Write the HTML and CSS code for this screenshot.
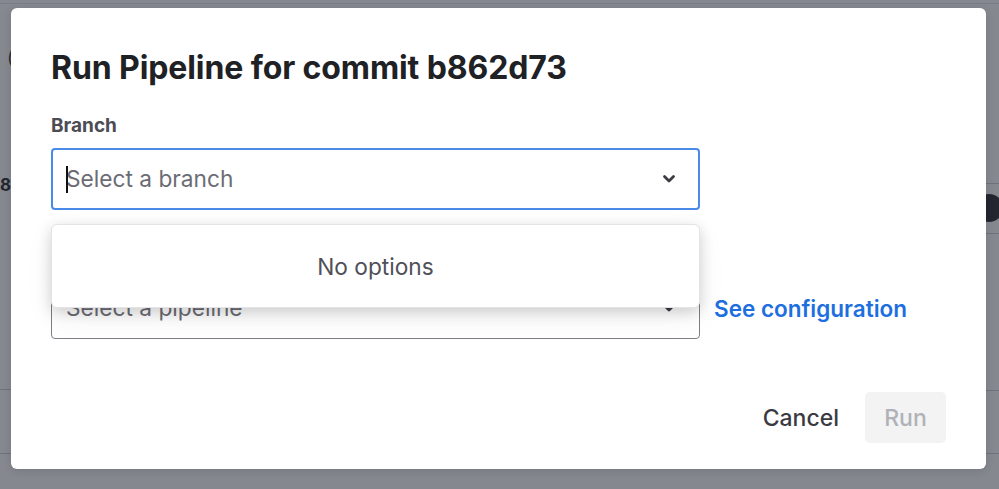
FILE: index.html
```html
<!DOCTYPE html>
<html>
<head>
<meta charset="utf-8">
<link rel="stylesheet" href="styles.css">
</head>
<body>
<div class="page">
  <div class="bg-top"></div>
  <span class="bg-paren">(</span>
  <span class="bg-eight">8</span>
  <div class="bg-line l1"></div>
  <div class="bg-line l2"></div>
  <div class="bg-line r1"></div>
  <div class="bg-line r2"></div>
  <div class="bg-line r3"></div>
  <div class="bg-line r4"></div>
  <div class="bg-circle"></div>
</div>
<div class="overlay">
  <div class="modal">
    <h1 class="title">Run Pipeline for commit b862d73</h1>
    <div class="field">
      <label class="label">Branch</label>
      <div class="select focused">
        <span class="caret"></span>
        <span class="placeholder">Select a branch</span>
        <svg class="chev" viewBox="0 0 16 16" width="16" height="16"><path d="M3.5 5.5 L8 10 L12.5 5.5" fill="none" stroke="#3c3d44" stroke-width="2.8" stroke-linecap="round" stroke-linejoin="round"/></svg>
      </div>
      <div class="menu">No options</div>
    </div>
    <div class="field second">
      <label class="label">Pipeline</label>
      <div class="row">
        <div class="select">
          <span class="placeholder">Select a pipeline</span>
          <svg class="chev" viewBox="0 0 16 16" width="16" height="16"><path d="M3.5 5.5 L8 10 L12.5 5.5" fill="none" stroke="#3c3d44" stroke-width="2.8" stroke-linecap="round" stroke-linejoin="round"/></svg>
        </div>
        <a class="link">See configuration</a>
      </div>
    </div>
    <div class="footer">
      <button class="btn cancel">Cancel</button>
      <button class="btn run">Run</button>
    </div>
  </div>
</div>
</body>
</html>
```
FILE: styles.css
```css
html, body {
  margin: 0;
  padding: 0;
  width: 999px;
  height: 489px;
  overflow: hidden;
  font-family: Inter, "Noto Sans", sans-serif;
}
.page {
  position: absolute;
  inset: 0;
  background: #ffffff;
}
.bg-top {
  position: absolute;
  left: 0;
  right: 0;
  top: 0;
  height: 3px;
  background: #ffffff;
  border-bottom: 1px solid #e4e4e7;
}
.bg-paren {
  position: absolute;
  left: 7px;
  top: 48px;
  font-size: 18px;
  line-height: 20px;
  color: #222;
}
.bg-eight {
  position: absolute;
  left: 0;
  top: 174px;
  font-size: 17px;
  line-height: 22px;
  font-weight: 700;
  color: #111;
}
.bg-line {
  position: absolute;
  height: 1px;
  background: #c9c9ce;
}
.bg-line.l1 { left: 0; width: 20px; top: 389px; }
.bg-line.l2 { left: 0; width: 20px; top: 453px; }
.bg-line.r1 { right: 0; width: 20px; top: 183px; }
.bg-line.r2 { right: 0; width: 20px; top: 233px; }
.bg-line.r3 { right: 0; width: 20px; top: 390px; }
.bg-line.r4 { right: 0; width: 20px; top: 453px; }
.bg-circle {
  position: absolute;
  left: 975px;
  top: 194px;
  width: 28px;
  height: 28px;
  border-radius: 50%;
  background: #111118;
}
.overlay {
  position: absolute;
  inset: 0;
  background: rgba(48, 52, 65, 0.59);
  padding: 8px 13px 20px 11px;
  box-sizing: border-box;
}
.modal {
  background: #ffffff;
  border-radius: 6px;
  height: 461px;
  box-sizing: border-box;
  padding: 40px 40px 26px 40px;
  display: flex;
  flex-direction: column;
  box-shadow: 0 2px 8px rgba(0,0,0,0.12);
}
.title {
  margin: 0;
  font-size: 32px;
  font-weight: 700;
  color: #202125;
  line-height: 40px;
  letter-spacing: -0.1px;
}
.field {
  position: relative;
  margin-top: 26px;
  width: 649px;
}
.field.second {
  margin-top: 33px;
  width: auto;
}
.label {
  display: block;
  font-size: 19px;
  font-weight: 700;
  color: #4b4c54;
  line-height: 24px;
  margin-bottom: 10px;
}
.row {
  display: flex;
  align-items: center;
  gap: 14px;
}
.select {
  width: 649px;
  height: 62px;
  box-sizing: border-box;
  border: 1px solid #7d7e86;
  border-radius: 4px;
  display: flex;
  align-items: center;
  padding: 0 22px 0 14px;
  position: relative;
  flex: none;
}
.select.focused {
  border: 2px solid #4a8be9;
  padding-left: 13px;
  padding-right: 21px;
}
.caret {
  position: absolute;
  left: 13px;
  top: 16px;
  width: 1.5px;
  height: 27px;
  background: #111;
}
.placeholder {
  flex: 1;
  font-size: 22.7px;
  color: #6b6c74;
  line-height: 28px;
}
.chev {
  flex: none;
}
.menu {
  position: absolute;
  left: 0;
  top: 110px;
  width: 649px;
  height: 84px;
  box-sizing: border-box;
  background: #fff;
  border: 1px solid #e4e4e7;
  border-radius: 6px;
  box-shadow: 0 4px 14px rgba(0,0,0,0.16), 0 10px 30px rgba(0,0,0,0.06);
  display: flex;
  align-items: center;
  justify-content: center;
  font-size: 22.7px;
  color: #4f5058;
  z-index: 2;
}
.link {
  font-size: 22.5px;
  font-weight: 600;
  color: #1d6fe0;
  cursor: pointer;
}
.footer {
  margin-top: auto;
  display: flex;
  justify-content: flex-end;
  align-items: center;
  gap: 26px;
}
.btn {
  font-family: Inter, "Noto Sans", sans-serif;
  font-size: 23px;
  font-weight: 500;
  border: none;
  background: none;
  height: 51px;
  border-radius: 5px;
  padding: 0 20px;
}
.cancel {
  color: #3a3b42;
  padding: 0 0;
}
.run {
  background: #f3f3f4;
  color: #b1b2b8;
  width: 81px;
  padding: 0;
}
```
